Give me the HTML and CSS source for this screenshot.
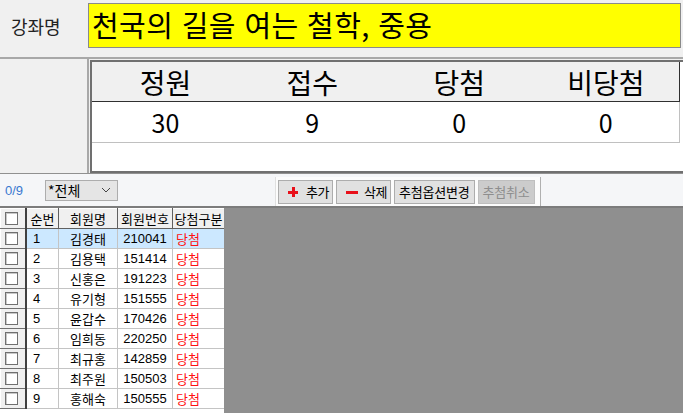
FILE: index.html
```html
<!DOCTYPE html>
<html lang="ko">
<head>
    <meta charset="UTF-8">
    <title>강좌 추첨</title>
    <link rel="stylesheet" href="styles.css">
</head>
<body>
    <div class="top">
        <span class="top-label">강좌명</span>
        <div class="course-name">천국의 길을 여는 철학, 중용</div>
    </div>

    <div class="stats">
        <div class="stats-side"></div>
        <div class="stats-box">
            <table class="stats-table">
                <tr>
                    <th>정원</th>
                    <th>접수</th>
                    <th>당첨</th>
                    <th>비당첨</th>
                </tr>
                <tr>
                    <td>30</td>
                    <td>9</td>
                    <td>0</td>
                    <td>0</td>
                </tr>
            </table>
        </div>
    </div>

    <div class="toolbar">
        <span class="count">0/9</span>
        <div class="select">
            <span>*전체</span>
            <svg class="chevron" width="10" height="6" viewBox="0 0 10 6"><path d="M1 1 L5 5 L9 1" fill="none" stroke="#444" stroke-width="1"/></svg>
        </div>
        <div class="btn-panel">
            <button class="btn btn-icon"><span class="ico plus"></span>추가</button>
            <button class="btn btn-icon"><span class="ico minus"></span>삭제</button>
            <button class="btn btn-text">추첨옵션변경</button>
            <button class="btn btn-text disabled">추첨취소</button>
        </div>
    </div>

    <div class="grid-area">
        <div class="grid">
            <table class="member-table">
                <thead>
                    <tr>
                        <th class="chk-col"><span class="chk"></span></th>
                        <th>순번</th>
                        <th>회원명</th>
                        <th>회원번호</th>
                        <th>당첨구분</th>
                    </tr>
                </thead>
                <tbody>
                    <tr class="selected"><td class="chk-col"><span class="chk"></span></td><td class="no">1</td><td>김경태</td><td class="num">210041</td><td class="win">당첨</td></tr>
                    <tr><td class="chk-col"><span class="chk"></span></td><td class="no">2</td><td>김용택</td><td class="num">151414</td><td class="win">당첨</td></tr>
                    <tr><td class="chk-col"><span class="chk"></span></td><td class="no">3</td><td>신홍은</td><td class="num">191223</td><td class="win">당첨</td></tr>
                    <tr><td class="chk-col"><span class="chk"></span></td><td class="no">4</td><td>유기형</td><td class="num">151555</td><td class="win">당첨</td></tr>
                    <tr><td class="chk-col"><span class="chk"></span></td><td class="no">5</td><td>윤갑수</td><td class="num">170426</td><td class="win">당첨</td></tr>
                    <tr><td class="chk-col"><span class="chk"></span></td><td class="no">6</td><td>임희동</td><td class="num">220250</td><td class="win">당첨</td></tr>
                    <tr><td class="chk-col"><span class="chk"></span></td><td class="no">7</td><td>최규홍</td><td class="num">142859</td><td class="win">당첨</td></tr>
                    <tr><td class="chk-col"><span class="chk"></span></td><td class="no">8</td><td>최주원</td><td class="num">150503</td><td class="win">당첨</td></tr>
                    <tr><td class="chk-col"><span class="chk"></span></td><td class="no">9</td><td>홍해숙</td><td class="num">150555</td><td class="win">당첨</td></tr>
                </tbody>
            </table>
        </div>
        <div class="grid-empty"></div>
    </div>
</body>
</html>
```

FILE: styles.css
```css
html, body {
    margin: 0;
    padding: 0;
}
body {
    width: 683px;
    height: 413px;
    overflow: hidden;
    background: #f0f0f0;
    font-family: "Noto Sans CJK KR", "Liberation Sans", sans-serif;
    color: #000;
}
.top {
    height: 59px;
    box-sizing: border-box;
    display: flex;
    align-items: flex-start;
    border-bottom: 2px solid #a8a8a8;
    padding-top: 3px;
}
.top-label {
    width: 88px;
    padding-left: 11px;
    box-sizing: border-box;
    font-size: 18px;
    line-height: 46px;
    color: #222;
}
.course-name {
    width: 593px;
    height: 45px;
    box-sizing: border-box;
    background: #ffff00;
    border: 1px solid #8a8a8a;
    font-size: 29px;
    line-height: 40px;
    padding-left: 3px;
    letter-spacing: 0.4px;
}
.stats {
    display: flex;
    height: 114px;
}
.stats-side {
    width: 87px;
    border-right: 2px solid #a8a8a8;
}
.stats-box {
    width: 593px;
    margin-top: 1px;
    margin-left: 1px;
    box-sizing: border-box;
    background: #fff;
    border-top: 2px solid #707070;
    border-left: 2px solid #707070;
    border-bottom: 2px solid #707070;
}
.stats-table {
    width: 588px;
    border-collapse: collapse;
    table-layout: fixed;
}
.stats-table th {
    height: 39px;
    background: #f0f0f0;
    font-size: 28px;
    font-weight: normal;
    line-height: 30px;
    border-bottom: 1px solid #303030;
    padding: 0;
}
.stats-table th:last-child {
    border-right: 1px solid #303030;
}
.stats-table td {
    height: 40px;
    text-align: center;
    font-size: 25px;
    padding: 0;
    border-bottom: 1px solid #c0c0c0;
}
.stats-table td:last-child {
    border-right: 1px solid #c0c0c0;
}
.toolbar {
    height: 33px;
    box-sizing: border-box;
    display: flex;
    align-items: center;
    background: #f5f6f8;
    border-top: 1px solid #909090;
}
.count {
    width: 45px;
    padding-left: 5px;
    box-sizing: border-box;
    font-size: 13px;
    color: #3a78d0;
    font-family: "Liberation Sans", sans-serif;
}
.select {
    width: 73px;
    height: 21px;
    box-sizing: border-box;
    border: 1px solid #adadad;
    background: #e5e5e5;
    display: flex;
    align-items: center;
    justify-content: space-between;
    padding: 0 6px 0 2px;
    font-size: 14px;
}
.btn-panel {
    margin-left: 157px;
    align-self: flex-end;
    height: 29px;
    box-sizing: border-box;
    display: flex;
    align-items: center;
    gap: 3px;
    padding: 0 5px 0 2px;
    background: #fcfcfc;
    border-left: 1px solid #e0e0e0;
    border-right: 1px solid #b0b0b0;
}
.btn {
    height: 24px;
    box-sizing: border-box;
    border: 1px solid #adadad;
    background: #e1e1e1;
    font-family: "Noto Sans CJK KR", sans-serif;
    font-size: 13px;
    padding: 0 2px;
    display: flex;
    align-items: center;
    white-space: nowrap;
    color: #000;
    letter-spacing: -0.5px;
}
.btn-icon {
    width: 55px;
    padding-left: 9px;
}
.btn-text {
    padding: 0 4px;
    letter-spacing: -0.2px;
}
.btn.disabled {
    background: #cccccc;
    border-color: #bfbfbf;
    color: #8e8e8e;
}
.ico {
    position: relative;
    flex: none;
    width: 10px;
    height: 10px;
    margin-right: 8px;
}
.ico::before, .ico::after {
    content: "";
    position: absolute;
    background: #e8101a;
}
.plus::before {
    left: 0;
    top: 4px;
    width: 10px;
    height: 3px;
}
.plus::after {
    left: 4px;
    top: 0;
    width: 3px;
    height: 10px;
}
.minus::before {
    left: 0;
    top: 4px;
    width: 12px;
    height: 3px;
}
.grid-area {
    display: flex;
    height: 207px;
    border-top: 2px solid #7c7c7c;
    background: #8f8f8f;
}
.grid {
    width: 224px;
    background: #fff;
    overflow: hidden;
}
.grid-empty {
    flex: 1;
}
.member-table {
    border-collapse: collapse;
    font-size: 13px;
    font-family: "Noto Sans CJK KR", sans-serif;
    table-layout: fixed;
    width: 224px;
}
.member-table th {
    height: 19px;
    padding: 0;
    font-weight: normal;
    font-size: 13px;
    background: #f0f0f0;
    border: 1px solid #606060;
    border-top: 1px solid #fff;
    border-left: 1px solid #fff;
    white-space: nowrap;
    line-height: 17px;
    overflow: hidden;
}
.member-table th:nth-child(1) { width: 20px; }
.member-table th:nth-child(2) { width: 31px; }
.member-table th:nth-child(3) { width: 58px; }
.member-table th:nth-child(4) { width: 54px; }
.member-table th:nth-child(5) { width: 51px; }
.member-table td {
    height: 19px;
    padding: 0;
    border: 1px solid #c4c4c4;
    text-align: center;
    line-height: 18px;
}
.member-table td.no {
    text-align: left;
    padding-left: 6px;
    font-family: "Liberation Sans", sans-serif;
}
.member-table td.num {
    font-family: "Liberation Sans", sans-serif;
}
.member-table td.win {
    color: #ff1010;
    text-align: left;
    padding-left: 3px;
}
.member-table .chk-col {
    background: #f0f0f0;
    border: 1px solid #fff;
    border-right: 2px solid #404040;
    border-bottom: 1px solid #707070;
    padding-left: 4px;
}
.member-table tr.selected td {
    background: #cce8ff;
}
.member-table tr.selected td.chk-col {
    background: #f0f0f0;
}
.chk {
    display: block;
    width: 13px;
    height: 13px;
    box-sizing: border-box;
    border: 1px solid #707070;
    background: #fff;
    box-shadow: inset 1px 1px 0 #c8c8c8;
}
```
